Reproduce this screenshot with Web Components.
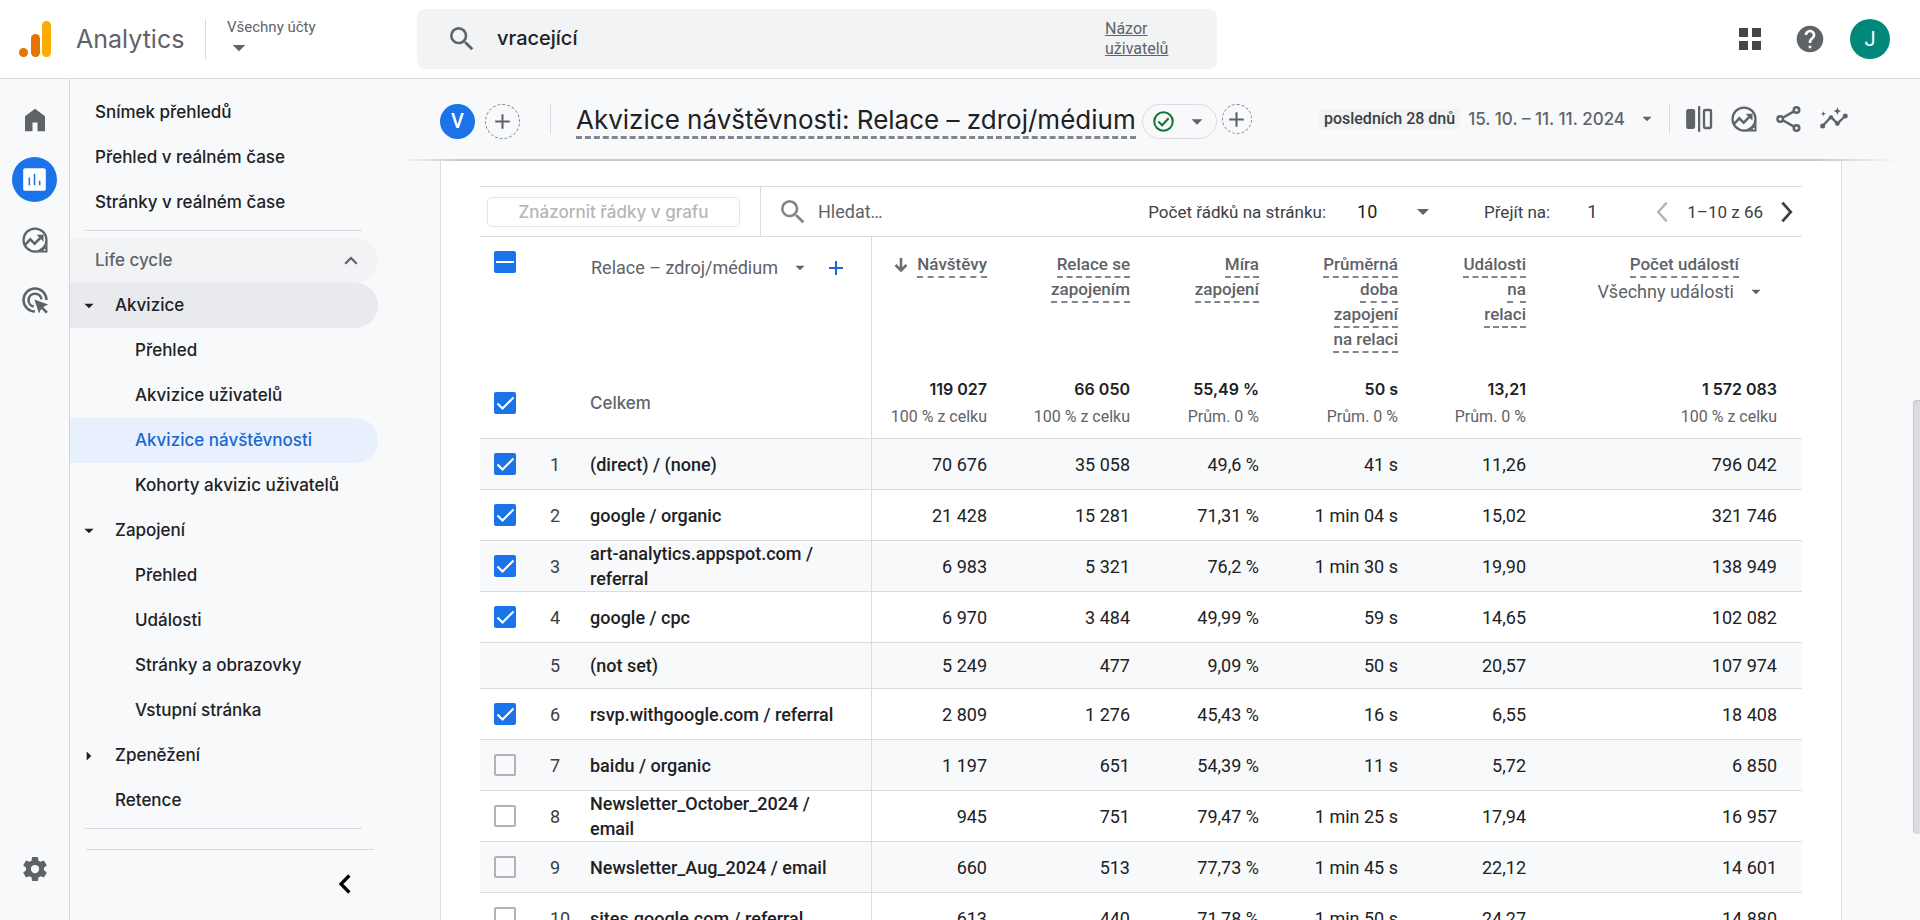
<!DOCTYPE html>
<html lang="cs">
<head>
<meta charset="utf-8">
<title>Analytics</title>
<style>
  html, body { margin: 0; height: 100%; }
  body { font-family: Roboto, "Liberation Sans", sans-serif; font-size: 18px; color: #202124; background: #f8f9fb; overflow: hidden; }
</style>
</head>
<body>
<ga-app></ga-app>

<template id="tpl-app">
  <style>
    :host { display: grid; grid-template: auto minmax(0, 1fr) / 70px 308px minmax(0, 1fr); height: 100vh; position: relative;
      --line: #dadce0; --grey: #5f6368; --blue: #1a73e8; --brand: Inter, Roboto, sans-serif; }
    ga-app-bar { grid-column: 1 / -1; }
    ga-rail, ga-side-nav, main { min-height: 0; overflow: hidden; }
    .thumb { position: absolute; right: 0; top: 400px; width: 7px; height: 434px; border-radius: 4px 0 0 4px; background: #dadce0; box-shadow: inset 1px 1px 0 #c6c8cc; }
    .card { margin: 0 78px 0 62px; padding: 25px 39px 0; border: solid var(--line); border-width: 0 1px; background: #fff; min-height: 100%; }
  </style>
  <ga-app-bar></ga-app-bar>
  <ga-rail></ga-rail>
  <ga-side-nav></ga-side-nav>
  <main>
    <ga-title-bar></ga-title-bar>
    <div class="card"><ga-table-tools></ga-table-tools><ga-report-table></ga-report-table></div>
  </main>
  <div class="thumb"></div>
</template>

<template id="tpl-app-bar">
  <style>
    :host { display: flex; align-items: center; height: 78px; background: #fff; border-bottom: 1px solid var(--line); color: var(--grey); }
    .brand { display: flex; align-items: center; width: 398px; padding-left: 19px; flex: none; }
    .name { font: 25px/40px var(--brand); margin-left: 25px; width: 129px; }
    .accounts { border: 0; border-left: 1px solid var(--line); background: none; height: 40px; padding: 0 0 0 21px; font: 15px/16px Roboto, sans-serif; color: inherit; text-align: left; display: flex; flex-direction: column; justify-content: flex-start; }
    .accounts ga-icon { margin: -2px 0 0 -3px; }
    .search { display: flex; align-items: center; width: 800px; height: 60px; box-sizing: border-box; padding: 0 49px 0 29px; border-radius: 8px; background: #f1f3f4; }
    .search input { flex: 1; min-width: 0; margin-left: 19px; border: 0; padding: 0 0 2px; background: none; outline: none; font: 500 20px/30px var(--brand); color: #202124; }
    .search a { width: 63px; font-size: 16px; line-height: 20px; color: inherit; }
    .right { margin-left: auto; padding-right: 30px; display: flex; align-items: center; }
    button.i { border: 0; background: none; padding: 0; color: inherit; display: flex; }
    .help { margin: 0 24px 0 29px; }
    .avatar { width: 40px; height: 40px; border-radius: 50%; border: 0; padding: 0; background: #00897b; color: #fff; font: 20px/40px Roboto, sans-serif; }
  </style>
  <div class="brand">
    <svg width="32" height="36" viewBox="0 0 32 36"><rect x="23" width="9" height="36" rx="4.5" fill="#f9ab00"/><rect x="12" y="13" width="9" height="23" rx="4.5" fill="#e37400"/><circle cx="4.5" cy="31.5" r="4.5" fill="#e37400"/></svg>
    <span class="name">Analytics</span>
    <button class="accounts"><span>Všechny účty</span><ga-icon name="drop" size="30"></ga-icon></button>
  </div>
  <div class="search"><ga-icon name="search" size="32"></ga-icon><input type="text" aria-label="Hledání" value="vracející"><a href="#">Názor uživatelů</a></div>
  <div class="right">
    <button class="i" aria-label="Aplikace"><ga-icon name="apps" size="30"></ga-icon></button>
    <button class="i help" aria-label="Nápověda"><ga-icon name="help" size="32"></ga-icon></button>
    <button class="avatar">J</button>
  </div>
</template>

<template id="tpl-rail">
  <style>
    :host { display: flex; flex-direction: column; align-items: center; gap: 15px; padding: 18px 0 29px; box-sizing: border-box; border-right: 1px solid #d0d3d8; color: var(--grey); }
    a { display: grid; place-items: center; width: 45px; height: 45px; border-radius: 50%; color: inherit; }
    .on { background: var(--blue); color: #fff; }
    .last { margin-top: auto; }
  </style>
  <a href="#" aria-label="Domů"><ga-icon name="home" size="30"></ga-icon></a>
  <a href="#" class="on" aria-label="Přehledy"><ga-icon name="reports" size="23"></ga-icon></a>
  <a href="#" aria-label="Průzkum"><ga-icon name="explore" size="30"></ga-icon></a>
  <a href="#" aria-label="Reklama"><ga-icon name="target" size="30"></ga-icon></a>
  <a href="#" class="last" aria-label="Správce"><ga-icon name="settings" size="30"></ga-icon></a>
</template>

<template id="tpl-side-nav">
  <style>
    :host { display: block; padding-top: 11px; }
    hr { border: 0; border-top: 1px solid var(--line); margin: 5px 16px 7px 15px; }
    hr.end { margin: 20px 4px 0 16px; }
    .fold { display: flex; margin: 19px 18px 0 auto; padding: 0; border: 0; background: none; color: #000; }
  </style>
  <ga-nav-item>Snímek přehledů</ga-nav-item>
  <ga-nav-item>Přehled v reálném čase</ga-nav-item>
  <ga-nav-item>Stránky v reálném čase</ga-nav-item>
  <hr>
  <ga-nav-item tone="section">Life cycle<ga-icon slot="end" name="up" size="30"></ga-icon></ga-nav-item>
  <ga-nav-item level="2" tone="group"><ga-icon slot="start" name="drop" size="22"></ga-icon>Akvizice</ga-nav-item>
  <ga-nav-item level="3">Přehled</ga-nav-item>
  <ga-nav-item level="3">Akvizice uživatelů</ga-nav-item>
  <ga-nav-item level="3" tone="current">Akvizice návštěvnosti</ga-nav-item>
  <ga-nav-item level="3">Kohorty akvizic uživatelů</ga-nav-item>
  <ga-nav-item level="2"><ga-icon slot="start" name="drop" size="22"></ga-icon>Zapojení</ga-nav-item>
  <ga-nav-item level="3">Přehled</ga-nav-item>
  <ga-nav-item level="3">Události</ga-nav-item>
  <ga-nav-item level="3">Stránky a obrazovky</ga-nav-item>
  <ga-nav-item level="3">Vstupní stránka</ga-nav-item>
  <ga-nav-item level="2"><ga-icon slot="start" name="right" size="22"></ga-icon>Zpeněžení</ga-nav-item>
  <ga-nav-item level="2">Retence</ga-nav-item>
  <hr><hr class="end">
  <button class="fold" aria-label="Sbalit"><ga-icon name="fold" size="30"></ga-icon></button>
</template>

<template id="tpl-nav-item">
  <style>
    :host { display: block; }
    a { display: flex; align-items: center; height: 45px; box-sizing: border-box; padding-right: 12px; border-radius: 0 23px 23px 0; color: #202124; text-decoration: none; font: 500 17px/25px var(--brand); }
    .start { display: flex; width: 25px; flex: none; }
    .start slot { display: flex; margin-left: 8px; }
    :host([level="2"]) .start { width: 45px; }
    :host([level="3"]) .start { width: 65px; }
    .label { flex: 1; }
    :host([tone="section"]) a { background: #f1f3f4; color: #5f6368; }
    :host([tone="group"]) a { background: #e8eaed; }
    :host([tone="current"]) a { background: #e8f0fe; color: #1967d2; }
  </style>
  <a href="#"><span class="start"><slot name="start"></slot></span><span class="label"><slot></slot></span><slot name="end"></slot></a>
</template>

<template id="tpl-title-bar">
  <style>
    :host { display: block; }
    .bar { display: flex; align-items: flex-start; height: 55px; padding: 25px 71px 0 62px; color: var(--grey); }
    .edge { height: 2px; margin: 0 20px; background: linear-gradient(90deg, transparent, #c9cbcf 60px, #c9cbcf calc(100% - 80px), transparent); }
    button { flex: none; box-sizing: border-box; border: 0; padding: 0; background: none; color: inherit; display: flex; align-items: center; justify-content: center; }
    .seg { width: 35px; height: 35px; border-radius: 50%; background: var(--blue); color: #fff; font: 500 20px/35px Roboto, sans-serif; }
    .add { width: 35px; height: 35px; margin: 0 30px 0 10px; border: 1px dashed #80868b; border-radius: 50%; }
    .add.small { width: 30px; height: 30px; margin: 0 0 0 5px; }
    .sep { width: 1px; height: 30px; background: var(--line); flex: none; }
    h1 { margin: 0 6px 0 25px; font: 26px/32px var(--brand); color: #202124; border-bottom: 3px dashed #80868b; white-space: nowrap; }
    .pill { width: 75px; height: 35px; border: 1px solid var(--line); border-radius: 18px; gap: 10px; padding-left: 4px; }
    .ok { color: #137333; }
    .date { margin-left: auto; height: 30px; white-space: nowrap; font: 500 17px/30px var(--brand); }
    .chip { padding: 0 5px; margin-right: 8px; background: #f1f3f4; font: 500 16px/20px Roboto, sans-serif; color: #3c4043; }
    .date ga-icon { margin: 0 11px; }
    .tools { display: flex; gap: 15px; margin-left: 14px; }
  </style>
  <div class="bar">
    <button class="seg">V</button>
    <button class="add" aria-label="Přidat porovnání"><ga-icon name="plus" size="25"></ga-icon></button>
    <span class="sep"></span>
    <h1>Akvizice návštěvnosti: Relace – zdroj/médium</h1>
    <button class="pill" aria-label="Kvalita dat"><ga-icon class="ok" name="ok" size="21"></ga-icon><ga-icon name="drop" size="26"></ga-icon></button>
    <button class="add small" aria-label="Přidat filtr"><ga-icon name="plus" size="25"></ga-icon></button>
    <button class="date"><span class="chip">posledních 28 dnů</span>15. 10. – 11. 11. 2024<ga-icon name="drop" size="22"></ga-icon></button>
    <span class="sep"></span>
    <div class="tools">
      <button aria-label="Porovnání"><ga-icon name="compare" size="30"></ga-icon></button>
      <button aria-label="Průzkum"><ga-icon name="explore" size="30"></ga-icon></button>
      <button aria-label="Sdílet"><ga-icon name="share" size="30"></ga-icon></button>
      <button aria-label="Statistiky"><ga-icon name="insights" size="30"></ga-icon></button>
    </div>
  </div>
  <div class="edge"></div>
</template>

<template id="tpl-table-tools">
  <style>
    :host { display: flex; align-items: center; height: 49px; border: solid var(--line); border-width: 1px 0; font-size: 17px; color: #3c4043; white-space: nowrap; }
    .plot { width: 253px; height: 30px; margin: 0 20px 0 7px; padding: 0; border: 1px solid #e4e6e9; border-radius: 5px; background: #fff; font: 500 17px/28px var(--brand); color: #b4b6b9; }
    .sep { width: 1px; align-self: stretch; background: var(--line); }
    .find { margin-left: 16px; color: #80868b; }
    input, select { border: 0; padding: 0; outline: none; background: none; font: 18px/24px Roboto, sans-serif; color: #3c4043; }
    .q { margin-left: 9px; width: 200px; }
    .q::placeholder { color: #5f6368; opacity: 1; }
    .rows { margin-left: auto; }
    select { appearance: none; width: 72px; margin: 0 55px 0 31px; color: #202124; background: url("data:image/svg+xml,%3Csvg xmlns='http://www.w3.org/2000/svg' width='12' height='6'%3E%3Cpath d='M0 0h12L6 6z' fill='%235f6368'/%3E%3C/svg%3E") no-repeat right center; }
    .page { width: 60px; margin-left: 37px; }
    button.i { display: flex; padding: 0; border: 0; background: none; color: #3c4043; }
    button.i:disabled { color: #b4b6b9; }
    .range { margin: 0 9px 0 10px; }
  </style>
  <button class="plot" disabled>Znázornit řádky v grafu</button>
  <span class="sep"></span>
  <ga-icon class="find" name="search" size="32"></ga-icon>
  <input class="q" type="text" placeholder="Hledat…" aria-label="Hledat">
  <label class="rows" for="rows">Počet řádků na stránku:</label>
  <select id="rows"><option>10</option></select>
  <label for="page">Přejít na:</label>
  <input class="page" id="page" type="text" value="1">
  <button class="i" disabled aria-label="Předchozí"><ga-icon name="prev" size="30"></ga-icon></button>
  <span class="range">1–10 z 66</span>
  <button class="i" aria-label="Další"><ga-icon name="next" size="30"></ga-icon></button>
</template>

<template id="tpl-report-table">
  <style>
    :host { display: block; }
    table { width: 100%; table-layout: fixed; border-collapse: separate; border-spacing: 0; font-size: 18px; line-height: 25px; }
    th, td { box-sizing: border-box; padding: 0 25px 0 0; text-align: right; font-weight: 400; white-space: nowrap; }
    .box { padding: 0 0 0 14px; text-align: left; }
    .n { padding: 0; text-align: left; color: #3c4043; }
    .dim { text-align: left; border-right: 1px solid var(--line); white-space: normal; }
    tbody th, tbody td { height: 51px; border-bottom: 1px solid var(--line); }
    tbody .dim { font-weight: 500; }
    tbody tr:nth-child(even) { background: #f8f9fb; }
    tbody tr.flat > * { height: 46px; }
    thead th { height: 120px; vertical-align: top; padding-top: 15px; font-size: 17px; }
    thead .box { padding-top: 14px; }
    thead .dim { padding-top: 19px; padding-right: 0; }
    .m { font-weight: 500; color: var(--grey); border-bottom: 2px dashed #80868b; padding-bottom: 2px; }
    .sort { display: inline-block; vertical-align: top; margin-right: 4px; color: #6b6f73; }
    button { display: inline-flex; align-items: center; height: 24px; padding: 0; border: 0; background: none; color: var(--grey); font: 18px/24px Roboto, sans-serif; vertical-align: top; }
    .pick ga-icon { margin-left: 11px; }
    .dim .pick { padding-left: 1px; }
    .plus { margin-left: 13px; color: #1967d2; }
    thead th.last { padding-right: 35px; }
    .last .m { margin-right: 28px; }
    .last .pick { margin-top: 3px; }
    tbody .total > * { height: 82px; padding-top: 18px; padding-bottom: 7px; }
    .total b { display: block; font: 600 16px/28px var(--brand); }
    .total small { display: block; font-size: 16px; line-height: 28px; color: var(--grey); }
    tbody .total .dim { font: 500 17px/25px var(--brand); color: var(--grey); }
  </style>
  <table>
    <colgroup><col style="width:70px"><col style="width:40px"><col style="width:282px"><col style="width:140px"><col style="width:143px"><col style="width:129px"><col style="width:139px"><col style="width:128px"><col></colgroup>
    <thead><tr>
      <th class="box"><ga-check state="mixed" label="Vybrat vše"></ga-check></th><th></th>
      <th class="dim"><button class="pick">Relace – zdroj/médium<ga-icon name="drop" size="22"></ga-icon></button><button class="plus" aria-label="Přidat dimenzi"><ga-icon name="plus" size="24"></ga-icon></button></th>
      <th><ga-icon class="sort" name="sort" size="24"></ga-icon><span class="m">Návštěvy</span></th>
      <th><span class="m">Relace se<br>zapojením</span></th>
      <th><span class="m">Míra<br>zapojení</span></th>
      <th><span class="m">Průměrná<br>doba<br>zapojení<br>na relaci</span></th>
      <th><span class="m">Události<br>na<br>relaci</span></th>
      <th class="last"><span class="m">Počet událostí</span><br><button class="pick">Všechny události<ga-icon name="drop" size="22"></ga-icon></button></th>
    </tr></thead>
    <tbody></tbody>
  </table>
</template>

<template id="tpl-check">
  <style>
    :host { display: block; width: 22px; height: 22px; }
    input { appearance: none; display: block; box-sizing: border-box; width: 22px; height: 22px; margin: 0; border: 2px solid #b0b2b5; border-radius: 2px; background: no-repeat center; background-origin: border-box; }
    input:checked, input:indeterminate { border-color: #1a73e8; background-color: #1a73e8; }
    input:checked { background-image: url("data:image/svg+xml,%3Csvg xmlns='http://www.w3.org/2000/svg' width='22' height='22'%3E%3Cpath d='M3.5 11.5l5 5L19.500 5.500' fill='none' stroke='white' stroke-width='2.200'/%3E%3C/svg%3E"); }
    input:indeterminate { background-image: url("data:image/svg+xml,%3Csvg xmlns='http://www.w3.org/2000/svg' width='22' height='22'%3E%3Cpath d='M2 11h18' stroke='white' stroke-width='2'/%3E%3C/svg%3E"); }
  </style>
  <input type="checkbox">
</template>

<script>
const fromTemplate = id => class extends HTMLElement {
  constructor() {
    super();
    this.attachShadow({ mode: 'open' }).append(document.getElementById(id).content.cloneNode(true));
  }
};

const ICONS = {
  drop: '<path d="M7 9.500l5 5 5-5z"/>',
  right: '<path d="M9.500 7v10l5-5z"/>',
  search: '<path d="M15.500 14h-.79l-.28-.27A6.470 6.470 0 0 0 16 9.500 6.500 6.500 0 1 0 9.500 16c1.610 0 3.090-.59 4.230-1.570l.27.28v.79l5 4.990L20.490 19l-4.990-5zm-6 0C7.010 14 5 11.990 5 9.500S7.010 5 9.500 5 14 7.010 14 9.500 11.990 14 9.500 14z"/>',
  apps: '<path fill="#444746" d="M3.200 3.200h7.200v7.200H3.200zM13.600 3.200h7.200v7.200h-7.200zM3.200 13.600h7.200v7.200H3.200zM13.600 13.600h7.200v7.200h-7.200z"/>',
  help: '<path d="M12 2C6.480 2 2 6.480 2 12s4.480 10 10 10 10-4.480 10-10S17.520 2 12 2zm1 17h-2v-2h2v2zm2.070-7.750l-.9.92C13.450 12.900 13 13.500 13 15h-2v-.5c0-1.100.45-2.100 1.170-2.830l1.240-1.260c.37-.36.59-.86.59-1.410 0-1.100-.9-2-2-2s-2 .9-2 2H8c0-2.210 1.790-4 4-4s4 1.790 4 4c0 .88-.36 1.680-.93 2.250z"/>',
  home: '<path d="M4 21V9l8-6 8 6v12h-6v-7h-4v7z"/>',
  reports: '<rect x=".2" y=".2" width="23.600" height="23.600" rx="2"/><path fill="#1a73e8" d="M5.800 10h1.600v8H5.800zM11.200 6h1.600v12h-1.600zM16.600 13.200h1.600V18h-1.600z"/>',
  explore: '<circle cx="12" cy="12" r="9.200" fill="none" stroke="currentColor" stroke-width="1.800"/><path fill-rule="evenodd" d="M22 12v10H12a10 10 0 0 0 10-10zM19.800 19.200a.7.7 0 1 0 .01 0z"/><path d="M4.200 15.800l4-4.300 3.500 3.400 5-5" fill="none" stroke="currentColor" stroke-width="2"/><path d="M13.300 7.800h5.500v5.500z"/>',
  target: '<g fill="none" stroke="currentColor" stroke-width="2"><path d="M21.200 12A9.200 9.200 0 1 0 12 21.200"/><path d="M17.200 11.500A5.200 5.200 0 1 0 11 17.200"/></g><path d="M11.500 11.500l11 4-4 2 3.800 3.800-1.500 1.500-3.800-3.800-1.800 3.800z"/>',
  settings: '<path fill-rule="evenodd" d="M19.140 12.940c.04-.3.06-.61.06-.94 0-.32-.02-.64-.07-.94l2.030-1.580c.18-.14.23-.41.12-.61l-1.920-3.320c-.12-.22-.37-.29-.59-.22l-2.390.96c-.5-.38-1.030-.7-1.620-.94L14.400 2.810c-.04-.24-.24-.41-.48-.41h-3.840c-.24 0-.43.17-.47.41L9.250 5.350c-.59.24-1.130.57-1.620.94l-2.390-.96c-.22-.08-.47 0-.59.22L2.740 8.870c-.12.21-.08.47.12.61l2.030 1.580c-.05.3-.09.63-.09.94s.02.64.07.94l-2.030 1.580c-.18.14-.23.41-.12.61l1.920 3.320c.12.22.37.29.59.22l2.390-.96c.5.38 1.030.7 1.620.94l.36 2.540c.05.24.24.41.48.41h3.840c.24 0 .44-.17.47-.41l.36-2.540c.59-.24 1.130-.56 1.620-.94l2.390.96c.22.08.47 0 .59-.22l1.920-3.320c.12-.22.07-.47-.12-.61zM12 15.300a3.300 3.300 0 1 1 0-6.600 3.300 3.300 0 0 1 0 6.600z"/>',
  up: '<path d="M7.400 14.200L12 9.600l4.600 4.600" fill="none" stroke="currentColor" stroke-width="1.800"/>',
  fold: '<path d="M15.500 5.200L8.800 12l6.700 6.800" fill="none" stroke="currentColor" stroke-width="2.600"/>',
  plus: '<path d="M11 5h2v6h6v2h-6v6h-2v-6H5v-2h6z"/>',
  ok: '<g fill="none" stroke="currentColor" stroke-width="2.300"><circle cx="12" cy="12" r="10.600"/><path d="M6.200 12l4.200 4.300 7.400-8"/></g>',
  compare: '<rect x="1.700" y="4" width="7.200" height="16" rx="1.800"/><path d="M11.200 1.700h1.800v20.600h-1.800z"/><rect x="16" y="4.800" width="5.600" height="14.400" rx="1" fill="none" stroke="currentColor" stroke-width="1.900"/>',
  share: '<g fill="none" stroke="currentColor" stroke-width="2"><circle cx="5" cy="12" r="2.200"/><circle cx="18" cy="4.800" r="2.200"/><circle cx="18" cy="19.200" r="2.200"/><path d="M7 11l9-5.100M7 13l9 5.100"/></g>',
  insights: '<path d="M2.900 17.600l6.700-7.200 5.100 5.300 6.300-6.100" fill="none" stroke="currentColor" stroke-width="1.900"/><circle cx="2.900" cy="17.600" r="2"/><circle cx="9.600" cy="10.600" r="1.700"/><circle cx="14.700" cy="15.600" r="1.900"/><circle cx="21" cy="9.600" r="2"/><path d="M14.700 2.600l.9 2.100 2.100.9-2.100.9-.9 2.100-.9-2.100-2.100-.9 2.100-.9zM3.500 5.700l.6 1.400 1.400.6-1.400.6-.6 1.400-.6-1.400-1.400-.6 1.400-.6z"/>',
  prev: '<path d="M15.700 4.500L9 12l6.700 7.500" fill="none" stroke="currentColor" stroke-width="2"/>',
  next: '<path d="M8.300 4.500L15 12l-6.700 7.500" fill="none" stroke="currentColor" stroke-width="2.200"/>',
  sort: '<path d="M12 6v12M6.500 13l5.500 5.500 5.500-5.500" fill="none" stroke="currentColor" stroke-width="2.600"/>'
};

customElements.define('ga-icon', class extends HTMLElement {
  connectedCallback() {
    if (this.shadowRoot) return;
    const size = this.getAttribute('size');
    this.attachShadow({ mode: 'open' }).innerHTML =
      `<style>:host{display:block;flex:none;width:${size}px;height:${size}px}svg{display:block;fill:currentColor}</style>
       <svg width="${size}" height="${size}" viewBox="0 0 24 24" aria-hidden="true">${ICONS[this.getAttribute('name')]}</svg>`;
  }
});

customElements.define('ga-check', class extends fromTemplate('tpl-check') {
  connectedCallback() {
    const input = this.shadowRoot.querySelector('input');
    input.setAttribute('aria-label', this.getAttribute('label') || 'Vybrat řádek');
    input.checked = this.getAttribute('state') === 'on';
    input.indeterminate = this.getAttribute('state') === 'mixed';
  }
});

const ROWS = [
  ['on', '(direct) / (none)', '70 676', '35 058', '49,6 %', '41 s', '11,26', '796 042'],
  ['on', 'google / organic', '21 428', '15 281', '71,31 %', '1 min 04 s', '15,02', '321 746'],
  ['on', 'art-analytics.appspot.com / referral', '6 983', '5 321', '76,2 %', '1 min 30 s', '19,90', '138 949'],
  ['on', 'google / cpc', '6 970', '3 484', '49,99 %', '59 s', '14,65', '102 082'],
  [null, '(not set)', '5 249', '477', '9,09 %', '50 s', '20,57', '107 974'],
  ['on', 'rsvp.withgoogle.com / referral', '2 809', '1 276', '45,43 %', '16 s', '6,55', '18 408'],
  ['off', 'baidu / organic', '1 197', '651', '54,39 %', '11 s', '5,72', '6 850'],
  ['off', 'Newsletter_October_2024 / email', '945', '751', '79,47 %', '1 min 25 s', '17,94', '16 957'],
  ['off', 'Newsletter_Aug_2024 / email', '660', '513', '77,73 %', '1 min 45 s', '22,12', '14 601'],
  ['off', 'sites.google.com / referral', '613', '440', '71,78 %', '1 min 50 s', '24,27', '14 880']
];
const TOTALS = [['119 027', '100 % z celku'], ['66 050', '100 % z celku'], ['55,49 %', 'Prům. 0 %'], ['50 s', 'Prům. 0 %'], ['13,21', 'Prům. 0 %'], ['1 572 083', '100 % z celku']];

customElements.define('ga-report-table', class extends fromTemplate('tpl-report-table') {
  connectedCallback() {
    const total = `<tr class="total"><td class="box"><ga-check state="on" label="Celkem"></ga-check></td><td></td><th class="dim" scope="row">Celkem</th>${
      TOTALS.map(([a, b]) => `<td><b>${a}</b><small>${b}</small></td>`).join('')}</tr>`;
    const rows = ROWS.map(([state, name, ...cells], i) =>
      `<tr${state ? '' : ' class="flat"'}><td class="box">${state ? `<ga-check state="${state}"></ga-check>` : ''}</td><td class="n">${i + 1}</td><th class="dim" scope="row">${name}</th>${
        cells.map(c => `<td>${c}</td>`).join('')}</tr>`);
    this.shadowRoot.querySelector('tbody').innerHTML = total + rows.join('');
  }
});

for (const name of ['nav-item', 'app-bar', 'rail', 'side-nav', 'title-bar', 'table-tools', 'app'])
  customElements.define('ga-' + name, fromTemplate('tpl-' + name));
</script>
</body>
</html>
